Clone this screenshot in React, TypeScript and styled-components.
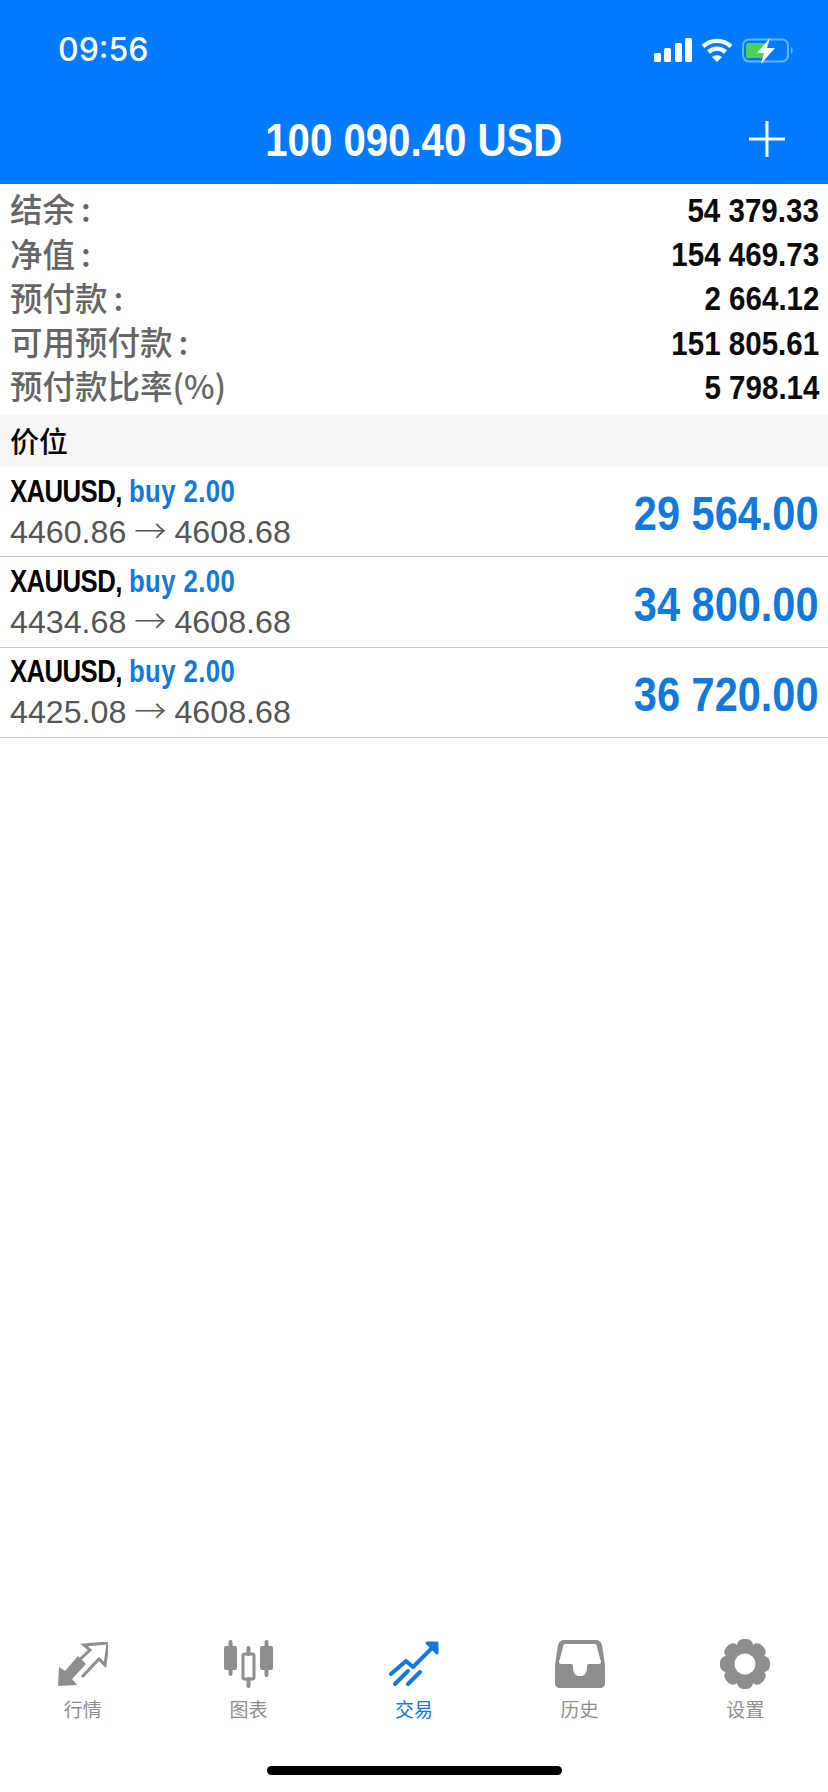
import styled, { createGlobalStyle } from "styled-components";

const GlobalStyle = createGlobalStyle`
    html, body {
        margin: 0;
        padding: 0;
        background: #ffffff;
    }
`

const Page = styled.div`
    width: 828px;
    height: 1792px;
    display: flex;
    flex-direction: column;
    background: #fff;
    overflow: hidden;
    font-family: "Liberation Sans", "Noto Sans CJK SC", sans-serif;
`

const Header = styled.header`
    height: 184px;
    background: #007aff;
    color: #fff;
    flex-shrink: 0;
`

const StatusBar = styled.div`
    height: 100px;
    display: flex;
    justify-content: space-between;
    align-items: flex-start;
    padding: 38px 34px 0 58px;
    box-sizing: border-box;
`

const Time = styled.div`
    font-family: "Inter", "Liberation Sans", sans-serif;
    font-size: 32px;
    font-weight: 500;
    line-height: 24px;
`

const StatusIcons = styled.div`
    display: flex;
    gap: 9px;
    align-items: flex-start;
`

const NavBar = styled.div`
    height: 84px;
    display: flex;
    justify-content: center;
    align-items: center;
    position: relative;
`

// no condensed face is installed, so the bold numbers get squeezed horizontally
const Condensed = styled.span<{ $scale: number; $origin?: string }>`
    display: inline-block;
    white-space: nowrap;
    font-weight: 700;
    transform: scaleX(${(p) => p.$scale});
    transform-origin: ${(p) => p.$origin || "right"} center;
`

const Title = styled.h1`
    margin: 0 0 5px;
    font-size: 47px;
    font-weight: 700;
    line-height: 1;
`

const PlusIcon = styled.svg`
    position: absolute;
    right: 43px;
    top: 21px;
`

const Summary = styled.section`
    padding-top: 5px;
    height: 231px;
    box-sizing: border-box;
`

const SummaryRow = styled.div`
    height: 44.2px;
    display: flex;
    justify-content: space-between;
    align-items: center;
    padding: 0 9px 0 10px;
`

const SummaryLabel = styled.span`
    font-family: "Noto Sans CJK SC", sans-serif;
    font-size: 32.5px;
    font-weight: 500;
    color: #666;
    line-height: 1;
    padding-bottom: 5px;
`

const Colon = styled.span`
    margin-left: 6px;
`

const SummaryValue = styled.span`
    font-size: 33px;
    color: #0a0a0a;
`

const SectionHeader = styled.div`
    height: 52px;
    display: flex;
    align-items: center;
    padding: 0 0 3px 10px;
    box-sizing: border-box;
    background: #f7f7f7;
    font-family: "Noto Sans CJK SC", sans-serif;
    font-size: 29px;
    font-weight: 500;
    color: #000;
`

const PositionRow = styled.div`
    height: 90.4px;
    box-sizing: border-box;
    display: flex;
    justify-content: space-between;
    align-items: center;
    padding: 0 9px 0 10px;
    border-bottom: 1.5px solid #c8c8c8;
`

const PositionInfo = styled.div`
    display: flex;
    flex-direction: column;
    gap: 1px;
`

const PositionTitle = styled.div`
    font-size: 31px;
    line-height: 36px;
    color: #000;
`

const Symbol = styled.span`
    letter-spacing: -0.7px;
`

const BuyText = styled.span`
    color: #1178dc;
    letter-spacing: 0.5px;
`

const PriceLine = styled.div`
    font-size: 32.2px;
    line-height: 36px;
    color: #555;
`

const Arrow = styled.span`
    font-family: "Noto Sans CJK SC", sans-serif;
    font-weight: 300;
    margin: 0 -1px;
`

const Profit = styled.div`
    font-size: 48px;
    color: #1178dc;
    padding-top: 4px;
`

const TabBar = styled.nav`
    margin-top: auto;
    display: flex;
    height: 156px;
    flex-shrink: 0;
    position: relative;
`

const Tab = styled.div<{ $active?: boolean }>`
    flex: 1;
    display: flex;
    flex-direction: column;
    align-items: center;
    padding-top: 2px;
    color: ${(p) => (p.$active ? "#1178dc" : "#8e8e8e")};
`

const TabIcon = styled.div`
    height: 52px;
    display: flex;
    align-items: center;
    justify-content: center;
`

const TabLabel = styled.div`
    margin-top: 7px;
    font-family: "Noto Sans CJK SC", sans-serif;
    font-size: 19px;
    line-height: 24px;
`

const HomeIndicator = styled.div`
    position: absolute;
    left: 267px;
    bottom: 17px;
    width: 295px;
    height: 9px;
    border-radius: 5px;
    background: #000;
`

const positions = [
    { open: "4460.86", profit: "29 564.00" },
    { open: "4434.68", profit: "34 800.00" },
    { open: "4425.08", profit: "36 720.00" },
];

const summary = [
    { label: "结余", colon: true, value: "54 379.33" },
    { label: "净值", colon: true, value: "154 469.73" },
    { label: "预付款", colon: true, value: "2 664.12" },
    { label: "可用预付款", colon: true, value: "151 805.61" },
    { label: "预付款比率(%)", colon: false, value: "5 798.14" },
];

function StatusGlyphs() {
    return (
        <StatusIcons>
            <svg width="38" height="24" viewBox="0 0 38 24" fill="#fff">
                <rect x="0" y="15" width="7" height="9" rx="1.5" />
                <rect x="10" y="10" width="7" height="14" rx="1.5" />
                <rect x="21" y="5" width="7" height="19" rx="1.5" />
                <rect x="31" y="0" width="7" height="24" rx="1.5" />
            </svg>
            <svg width="32" height="24" viewBox="0 0 32 24" fill="none" stroke="#fff" strokeWidth="4.4">
                <path d="M2 8.5C10 1 22 1 30 8.5" />
                <path d="M7.5 14c5-4.5 12-4.5 17 0" />
                <path d="M16 24l-5-5c3-2.5 7-2.5 10 0z" fill="#fff" stroke="none" />
            </svg>
            <svg width="52" height="26" viewBox="0 0 52 26" fill="none">
                <rect x="1" y="1.5" width="45" height="22" rx="6" stroke="#6bb5ff" strokeWidth="2" />
                <path d="M49 9c2 1 2 6 0 7z" fill="#6bb5ff" />
                <path d="M4 7a2 2 0 0 1 2-2h18v15H6a2 2 0 0 1-2-2z" fill="#4cd05c" />
                <path d="M28 0L15 15h7l-3 11 14-16h-8z" fill="#fff" />
            </svg>
        </StatusIcons>
    );
}

function QuotesIcon() {
    return (
        <svg width="50" height="44" viewBox="0 0 50 44">
            <path d="M0 44L1 25l6 4 13-15 8 8-14 15 5 6z" fill="currentColor" />
            <path d="M17 22L32 8 26 3l24-2-3 22-6-6-17 18" fill="none" stroke="currentColor" strokeWidth="3" />
        </svg>
    );
}

function ChartIcon() {
    return (
        <svg width="49" height="48" viewBox="0 0 49 48" fill="currentColor" stroke="currentColor" strokeLinecap="round">
            <path d="M6.5 2v32M42.5 2v33" strokeWidth="4" />
            <rect x="0" y="6" width="13" height="24" rx="2" strokeWidth="0" />
            <rect x="36" y="6" width="13" height="24" rx="2" strokeWidth="0" />
            <path d="M24.5 8v6M24.5 39v7" strokeWidth="4" />
            <rect x="19" y="14" width="11" height="25" rx="1.5" fill="none" strokeWidth="3" />
        </svg>
    );
}

function TradeIcon() {
    return (
        <svg width="50" height="46" viewBox="0 0 50 46" fill="none" stroke="currentColor" strokeWidth="4" strokeLinecap="round" strokeLinejoin="round">
            <path d="M2 33l15-13 7 6 20-20" />
            <path d="M38 2h10v10z" fill="currentColor" strokeWidth="3" />
            <path d="M6 43l13-13M19 43l12-12" />
        </svg>
    );
}

function HistoryIcon() {
    return (
        <svg width="50" height="48" viewBox="0 0 50 48">
            <path
                d="M9 0h32c3 0 5 2 6 5l3 20v18c0 3-2 5-5 5H5c-3 0-5-2-5-5V25L3 5C4 2 6 0 9 0z"
                fill="currentColor"
            />
            <path
                d="M11 4h28c2 0 3 1 3 3l4 15c0 1-1 2-2 2H34c-2 0-2 1-2 3 0 7-3 9-6 9h-2c-3 0-6-2-6-9 0-2 0-3-2-3H6c-1 0-2-1-2-2L8 7c0-2 1-3 3-3z"
                fill="#fff"
            />
        </svg>
    );
}

function SettingsIcon() {
    const lobes = [0, 45, 90, 135, 180, 225, 270, 315];
    return (
        <svg width="50" height="50" viewBox="0 0 50 50" fill="currentColor">
            <circle cx="25" cy="25" r="20" />
            {lobes.map((angle) => (
                <rect key={angle} x="17" y="0" width="16" height="12" rx="6.5" transform={`rotate(${angle} 25 25)`} />
            ))}
            <circle cx="25" cy="25" r="10.5" fill="#fff" />
        </svg>
    );
}

const tabs = [
    { label: "行情", icon: <QuotesIcon /> },
    { label: "图表", icon: <ChartIcon /> },
    { label: "交易", icon: <TradeIcon />, active: true },
    { label: "历史", icon: <HistoryIcon /> },
    { label: "设置", icon: <SettingsIcon /> },
];

function App() {
    return (
        <Page>
            <GlobalStyle />
            <Header>
                <StatusBar>
                    <Time>09:56</Time>
                    <StatusGlyphs />
                </StatusBar>
                <NavBar>
                    <Title>
                        <Condensed $scale={0.855} $origin="center">100 090.40 USD</Condensed>
                    </Title>
                    <PlusIcon width="36" height="36" viewBox="0 0 36 36" stroke="#fff" strokeWidth="3">
                        <path d="M18 0v36M0 18h36" />
                    </PlusIcon>
                </NavBar>
            </Header>
            <Summary>
                {summary.map((row) => (
                    <SummaryRow key={row.label}>
                        <SummaryLabel>
                            {row.label}
                            {row.colon && <Colon>:</Colon>}
                        </SummaryLabel>
                        <SummaryValue>
                            <Condensed $scale={0.895}>{row.value}</Condensed>
                        </SummaryValue>
                    </SummaryRow>
                ))}
            </Summary>
            <SectionHeader>价位</SectionHeader>
            {positions.map((pos) => (
                <PositionRow key={pos.open}>
                    <PositionInfo>
                        <PositionTitle>
                            <Condensed $scale={0.83} $origin="left">
                                <Symbol>XAUUSD,</Symbol> <BuyText>buy 2.00</BuyText>
                            </Condensed>
                        </PositionTitle>
                        <PriceLine>
                            {pos.open} <Arrow>→</Arrow> 4608.68
                        </PriceLine>
                    </PositionInfo>
                    <Profit>
                        <Condensed $scale={0.865}>{pos.profit}</Condensed>
                    </Profit>
                </PositionRow>
            ))}
            <TabBar>
                {tabs.map((tab) => (
                    <Tab key={tab.label} $active={tab.active}>
                        <TabIcon>{tab.icon}</TabIcon>
                        <TabLabel>{tab.label}</TabLabel>
                    </Tab>
                ))}
                <HomeIndicator />
            </TabBar>
        </Page>
    );
}

export default App;
